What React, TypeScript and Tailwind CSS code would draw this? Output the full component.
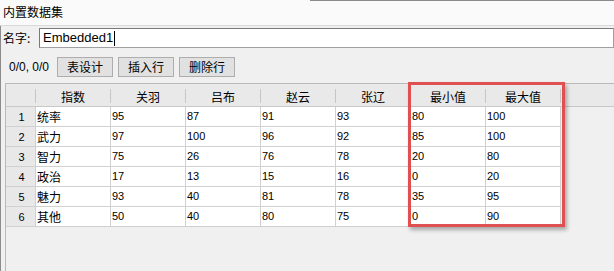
import React from "react";

const cols = ["指数", "关羽", "吕布", "赵云", "张辽", "最小值", "最大值"];
const rows = [
  ["统率", "95", "87", "91", "93", "80", "100"],
  ["武力", "97", "100", "96", "92", "85", "100"],
  ["智力", "75", "26", "76", "78", "20", "80"],
  ["政治", "17", "13", "15", "16", "0", "20"],
  ["魅力", "93", "40", "81", "78", "35", "95"],
  ["其他", "50", "40", "80", "75", "0", "90"],
];

export default function App() {
  return (
    <div className="relative w-[614px] h-[271px] overflow-hidden bg-[#f0f0f0] flex flex-col font-['Liberation_Sans','Noto_Sans_CJK_SC',sans-serif] text-black">
      {/* title bar */}
      <div className="h-[26px] flex bg-[#fafafa] border-b border-[#d9d9d9]">
        <div className="w-[310px] pl-[3px] pt-[4px] text-[12px] leading-[16px] font-['Noto_Sans_CJK_SC',sans-serif]">
          内置数据集
        </div>
        <div className="flex-1 border-t border-[#8a8a8a]" />
      </div>
      {/* body */}
      <div className="flex-1 flex flex-col border-l border-[#8c8c8c]">
        {/* name row */}
        <div className="flex items-center mt-[2px] h-[20px]">
          <div className="w-[38px] pl-[2px] text-[12px] leading-[16px] font-['Noto_Sans_CJK_SC',sans-serif]">
            名字:
          </div>
          <div className="flex-1 h-[20px] bg-white border border-[#a0a0a0] border-l-[#7a7a7a] border-t-[#7a7a7a] flex items-center pl-[3px]">
            <span className="text-[13px] leading-[16px] font-['Liberation_Sans',sans-serif]">Embedded1</span>
            <span className="w-[1px] h-[15px] bg-black ml-[1px]" />
          </div>
        </div>
        {/* toolbar */}
        <div className="flex items-center mt-[9px] h-[20px]">
          <div className="w-[56px] pl-[8px] text-[12px] leading-[14px] font-['Liberation_Sans',sans-serif]">0/0, 0/0</div>
          {["表设计", "插入行", "删除行"].map((t) => (
            <div
              key={t}
              className="w-[56px] h-[20px] mr-[5px] bg-[#e1e1e1] border border-[#adadad] flex items-center justify-center text-[12px] leading-[14px] font-['Noto_Sans_CJK_SC',sans-serif]"
            >
              {t}
            </div>
          ))}
        </div>
        {/* table pane */}
        <div className="flex-1 mt-[6px] ml-[4px] border-t border-l border-[#b9b9b9] bg-[#f0f0f0]">
          {/* header */}
          <div className="flex h-[23px] bg-[#e9e9e9] border-b border-[#c8c8c8]">
            <div className="w-[30px] flex items-center justify-end">
              <div className="w-[1px] h-[14px] bg-[#c6c6c6] mt-[2px]" />
            </div>
            {cols.map((c) => (
              <div key={c} className="w-[75px] flex items-center">
                <div className="flex-1 text-center text-[12px] leading-[14px] pt-[4px] font-['Noto_Sans_CJK_SC',sans-serif]">
                  {c}
                </div>
                <div className="w-[1px] h-[14px] bg-[#c6c6c6] mt-[2px]" />
              </div>
            ))}
            <div className="flex-1" />
          </div>
          {/* rows */}
          {rows.map((r, i) => (
            <div key={i} className="flex h-[20px]">
              <div className="w-[30px] bg-[#e8e8e8] border-b border-r border-[#d0d0d0] flex items-center justify-center text-[11px] leading-[12px] font-['Liberation_Sans',sans-serif] pl-[2px]">
                {i + 1}
              </div>
              {r.map((v, j) => (
                <div
                  key={j}
                  className={
                    j === 0
                      ? "w-[75px] bg-white border-b border-r border-[#d0d0d0] flex items-center pl-[1px] text-[12px] leading-[14px] font-['Noto_Sans_CJK_SC',sans-serif]"
                      : "w-[75px] bg-white border-b border-r border-[#d0d0d0] flex items-center pl-[1px] text-[11px] leading-[13px] font-['Liberation_Sans',sans-serif]"
                  }
                >
                  {v}
                </div>
              ))}
            </div>
          ))}
        </div>
      </div>
      {/* highlight box */}
      <div className="absolute left-[408px] top-[82px] w-[157px] h-[145px] border-[3px] border-[#e05050] shadow-[2px_3px_4px_rgba(0,0,0,0.3)]" />
    </div>
  );
}
